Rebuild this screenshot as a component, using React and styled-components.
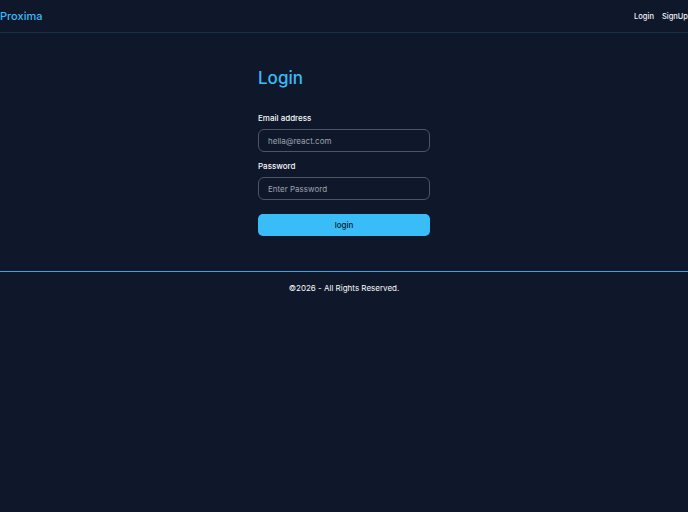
import React from 'react';
import styled, { createGlobalStyle } from 'styled-components';

const GlobalStyle = createGlobalStyle`
  html, body {
    margin: 0;
    padding: 0;
    background: #0f172a;
    font-family: Inter, "Noto Sans", sans-serif;
  }
`;

const Page = styled.div`
  min-height: 512px;
  background: #0f172a;
  color: #f8fafc;
`;

const Header = styled.header`
  height: 32px;
  display: flex;
  align-items: center;
  justify-content: space-between;
  border-bottom: 1px solid #16304a;
`;

const Brand = styled.a`
  color: #38bdf8;
  font-size: 11px;
  font-weight: 500;
  text-decoration: none;
`;

const Nav = styled.nav`
  display: flex;
  gap: 8px;
`;

const NavLink = styled.a`
  color: #f1f5f9;
  font-size: 7.5px;
  font-weight: 500;
  text-decoration: none;
`;

const Main = styled.main`
  width: 172px;
  margin: 0 auto;
  padding: 34px 0 35px;
`;

const Title = styled.h1`
  margin: 0 0 24px;
  color: #38bdf8;
  font-size: 17px;
  font-weight: 500;
  line-height: 22px;
`;

const Form = styled.form`
  display: flex;
  flex-direction: column;
`;

const Field = styled.div`
  display: flex;
  flex-direction: column;
  gap: 6px;
  margin-bottom: ${(p) => p.$gap || 9}px;
`;

const Label = styled.label`
  font-size: 8px;
  font-weight: 500;
  color: #f8fafc;
  line-height: 10px;
`;

const Input = styled.input`
  box-sizing: border-box;
  height: 23px;
  width: 100%;
  padding: 0 9px;
  border: 1px solid #4b5563;
  border-radius: 6px;
  background: transparent;
  color: #e2e8f0;
  font-family: Inter, sans-serif;
  font-size: 8px;
  outline: none;

  &::placeholder {
    color: #9ca3af;
  }
`;

const Button = styled.button`
  height: 22px;
  border: none;
  border-radius: 5px;
  background: #38bdf8;
  color: #0f172a;
  font-family: Inter, sans-serif;
  font-size: 8px;
  font-weight: 500;
  cursor: pointer;
`;

const Footer = styled.footer`
  border-top: 1px solid #38a4e6;
  padding: 11px 0;
  text-align: center;
  font-size: 8px;
  line-height: 10px;
  color: #f8fafc;
`;

export default function App() {
  return (
    <Page>
      <GlobalStyle />
      <Header>
        <Brand href="#">Proxima</Brand>
        <Nav>
          <NavLink href="#">Login</NavLink>
          <NavLink href="#">SignUp</NavLink>
        </Nav>
      </Header>
      <Main>
        <Title>Login</Title>
        <Form onSubmit={(e) => e.preventDefault()}>
          <Field>
            <Label>Email address</Label>
            <Input type="email" placeholder="hella@react.com" />
          </Field>
          <Field $gap={14}>
            <Label>Password</Label>
            <Input type="password" placeholder="Enter Password" />
          </Field>
          <Button type="submit">login</Button>
        </Form>
      </Main>
      <Footer>©2026 - All Rights Reserved.</Footer>
    </Page>
  );
}
